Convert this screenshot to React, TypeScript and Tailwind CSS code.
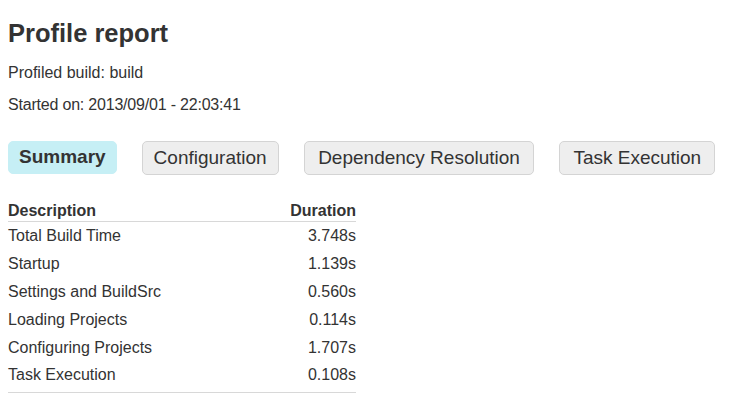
const rows = [
  ['Total Build Time', '3.748s'],
  ['Startup', '1.139s'],
  ['Settings and BuildSrc', '0.560s'],
  ['Loading Projects', '0.114s'],
  ['Configuring Projects', '1.707s'],
  ['Task Execution', '0.108s'],
]

const tabs = [
  { label: 'Summary', cls: 'h-[33px] px-[10px] bg-[#c6eff5] border-[#c6eff5] font-bold' },
  { label: 'Configuration', cls: 'h-[34px] px-[11px] bg-[#eeeeee] border-[#d4d4d4]' },
  { label: 'Dependency Resolution', cls: 'h-[34px] px-[13.5px] bg-[#eeeeee] border-[#d4d4d4]' },
  { label: 'Task Execution', cls: 'h-[34px] px-[13px] bg-[#eeeeee] border-[#d4d4d4]' },
]

export default function App() {
  return (
    <div className="min-h-screen bg-white px-2 text-[#333] font-['Liberation_Sans',Arial,sans-serif]">
      <h1 className="pt-[18px] text-[25.5px] leading-[30px] font-bold">Profile report</h1>
      <p className="mt-[15px] text-[16px] leading-[20px]">Profiled build: build</p>
      <p className="mt-[12px] text-[16px] leading-[20px] tracking-[-0.2px]">Started on: 2013/09/01 - 22:03:41</p>

      <div className="mt-[26px] flex gap-[25px]">
        {tabs.map((t) => (
          <div key={t.label} className={`flex items-center rounded-[5px] border text-[19px] ${t.cls}`}>
            {t.label}
          </div>
        ))}
      </div>

      <table className="mt-[26px] w-[348px] text-[16px] border-collapse border-b border-[#d8d8d8]">
        <thead>
          <tr className="border-b border-[#d8d8d8]">
            <th className="text-left font-bold h-[20px] leading-[20px]">Description</th>
            <th className="text-right font-bold h-[20px] leading-[20px]">Duration</th>
          </tr>
        </thead>
        <tbody>
          {rows.map(([d, v], i) => (
            <tr key={d} className={i === rows.length - 1 ? 'h-[31px]' : 'h-[28px]'}>
              <td className={i === rows.length - 1 ? 'text-left pb-[3px]' : 'text-left'}>{d}</td>
              <td className={i === rows.length - 1 ? 'text-right pb-[3px]' : 'text-right'}>{v}</td>
            </tr>
          ))}
        </tbody>
      </table>
    </div>
  )
}
